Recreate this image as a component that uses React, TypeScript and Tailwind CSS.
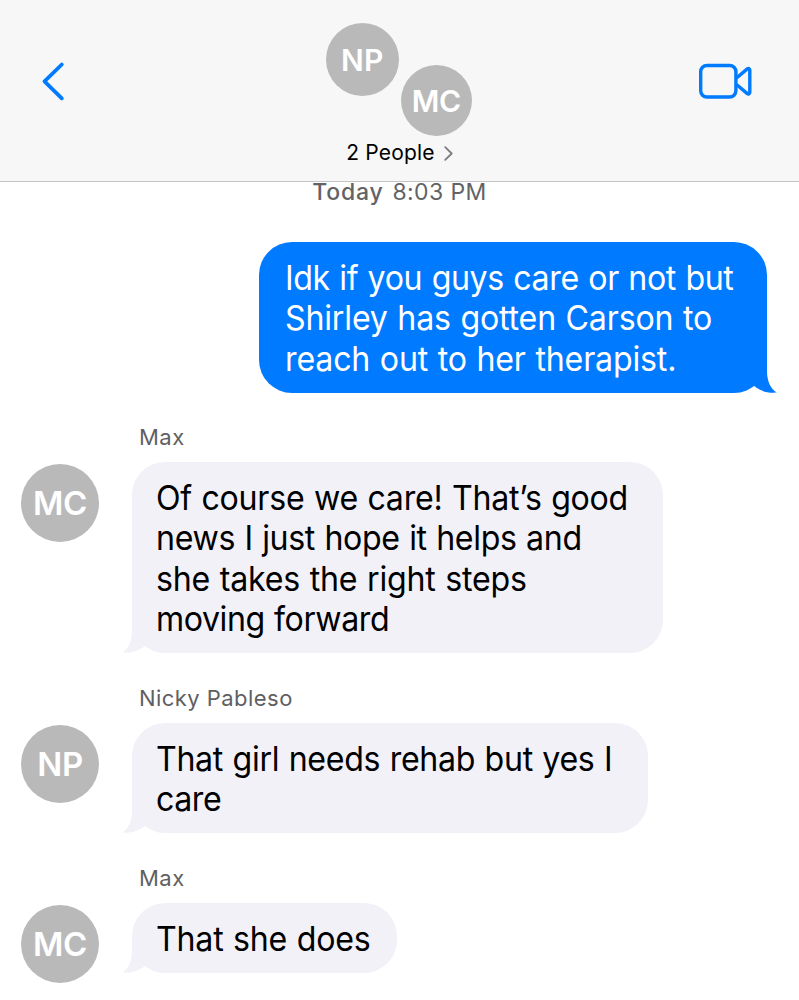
import React from "react";

type Line = { text: string; tracking: string };

function Avatar({ initials, className }: { initials: string; className: string }) {
  return (
    <div
      className={`flex shrink-0 items-center justify-center rounded-full bg-[#b9b9b9] font-semibold text-white ${className}`}
    >
      {initials}
    </div>
  );
}

function Lines({ lines }: { lines: Line[] }) {
  return (
    <>
      {lines.map((line) => (
        <div key={line.text} className="h-[40.3px] leading-[40.3px] whitespace-nowrap [word-spacing:0.8px]">
          <span className={`inline-block origin-left scale-x-[0.96] ${line.tracking}`}>{line.text}</span>
        </div>
      ))}
    </>
  );
}

function Tail({ className }: { className: string }) {
  return (
    <svg className={`absolute bottom-0 h-10 w-8 ${className}`} viewBox="0 0 32 40" fill="currentColor">
      <path d="M22 0V18C22 28 25.5 36 31.8 39.6C22 40.5 14.5 37.5 9 32.8L0 20V0Z" />
    </svg>
  );
}

function Incoming({
  name,
  initials,
  lines,
  rowClass,
  bubbleClass,
}: {
  name: string;
  initials: string;
  lines: Line[];
  rowClass: string;
  bubbleClass: string;
}) {
  return (
    <section className={rowClass}>
      <div className="ml-[139px] h-[38px] text-[22px] leading-[26px] tracking-[0.45px] text-[#5f5f63]">{name}</div>
      <div className="flex items-start pl-[21px]">
        <Avatar initials={initials} className="mt-[1.5px] mr-[33px] size-[78px] pt-[3px] text-[33px] tracking-[-0.3px]" />
        <div className={`relative rounded-[33px] bg-[#f2f1f8] pt-[16px] pl-[24.3px] text-black ${bubbleClass}`}>
          <Lines lines={lines} />
          <Tail className="left-[-10px] -scale-x-100 text-[#f2f1f8]" />
        </div>
      </div>
    </section>
  );
}

export default function App() {
  return (
    <div className="h-[1000px] w-[799px] overflow-hidden bg-white font-['Inter',sans-serif] text-[33.5px]">
      <header className="flex h-[182px] items-start justify-between border-b border-[#c4c4c5] bg-[#f7f7f7]">
        <button aria-label="Back" className="mt-[61px] ml-[40px] w-[100px]">
          <svg className="h-[41px] w-[27px]" viewBox="0 0 27 41" fill="none" stroke="#007aff" strokeWidth="3.8" strokeLinecap="round" strokeLinejoin="round">
            <path d="M21.8 3.5L4.5 20.4L21.8 37.3" />
          </svg>
        </button>
        <div className="flex w-[160px] flex-col items-center pt-[23px] text-black">
          <div className="mr-[1.4px] flex w-[146px] items-start gap-[2px]">
            <Avatar initials="NP" className="size-[73px] pt-[2px] text-[30px] tracking-[0.3px]" />
            <Avatar initials="MC" className="mt-[42px] size-[71px] pt-[2px] text-[30px] tracking-[-0.3px]" />
          </div>
          <div className="mt-[3.5px] flex h-[26px] items-center gap-[9px] text-[21px] leading-[26px] whitespace-nowrap">
            <span className="tracking-[0.2px]">2 People</span>
            <svg className="mt-[2px] h-[15px] w-[9px]" viewBox="0 0 9 15" fill="none" stroke="#7d7d80" strokeWidth="1.8" strokeLinecap="round" strokeLinejoin="round">
              <path d="M1.2 1.2L7.7 7.5L1.2 13.8" />
            </svg>
          </div>
        </div>
        <button aria-label="Video call" className="mt-[61px] mr-[45px] flex w-[95px] justify-end">
          <svg className="h-[40px] w-[56px]" viewBox="0 0 56 40" fill="none" stroke="#007aff" strokeWidth="3.4" strokeLinejoin="round">
            <rect x="2.7" y="4.5" width="35.2" height="31.5" rx="6.2" />
            <path d="M38.5 17L49 8.1C50.4 7 51.8 7.6 51.8 9.3V31.2C51.8 32.9 50.4 33.5 49 32.4L38.5 23.5" />
          </svg>
        </button>
      </header>

      <main>
        <div className="flex h-[60px] items-start justify-center gap-[9px] text-[23px] leading-[20px] text-[#636366]">
          <span className="font-medium tracking-[0.8px]">Today</span>
          <span className="tracking-[0.4px]">8:03 PM</span>
        </div>

        <div className="flex justify-end pr-[32px]">
          <div className="relative h-[150.5px] w-[508px] rounded-[33px] bg-[#007aff] pt-[16px] pl-[26px] text-white">
            <Lines
              lines={[
                { text: "Idk if you guys care or not but", tracking: "tracking-[-0.4px]" },
                { text: "Shirley has gotten Carson to", tracking: "tracking-[-0.2px]" },
                { text: "reach out to her therapist.", tracking: "tracking-[-0.19px]" },
              ]}
            />
            <Tail className="right-[-10px] text-[#007aff]" />
          </div>
        </div>

        <Incoming
          name="Max"
          initials="MC"
          rowClass="mt-[31.5px]"
          bubbleClass="h-[191px] w-[531px]"
          lines={[
            { text: "Of course we care! That’s good", tracking: "tracking-[-0.28px]" },
            { text: "news I just hope it helps and", tracking: "tracking-[-0.38px]" },
            { text: "she takes the right steps", tracking: "tracking-[-0.21px]" },
            { text: "moving forward", tracking: "tracking-[-0.47px]" },
          ]}
        />
        <Incoming
          name="Nicky Pableso"
          initials="NP"
          rowClass="mt-[32px]"
          bubbleClass="h-[110px] w-[516px]"
          lines={[
            { text: "That girl needs rehab but yes I", tracking: "tracking-[-0.34px]" },
            { text: "care", tracking: "tracking-[-0.5px]" },
          ]}
        />
        <Incoming
          name="Max"
          initials="MC"
          rowClass="mt-[32px]"
          bubbleClass="h-[70px] w-[265px]"
          lines={[{ text: "That she does", tracking: "tracking-[-0.23px]" }]}
        />
      </main>
    </div>
  );
}
